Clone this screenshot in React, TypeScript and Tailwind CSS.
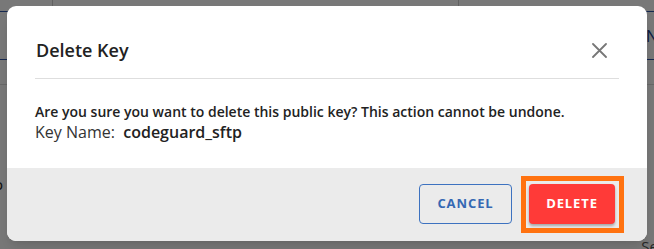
import React from "react";

export default function App() {
  return (
    <div
      className="relative w-[654px] h-[249px] overflow-hidden bg-white"
      style={{ fontFamily: '"Open Sans", "Noto Sans", sans-serif' }}
    >
      {/* underlying page */}
      <div className="flex flex-col w-full h-full">
        <div className="flex h-[12px] border-b border-[#2f55a8]">
          <div className="w-[53px] border-r border-[#cfcfcf]" />
          <div className="w-[406px] border-r border-[#cfcfcf]" />
          <div className="flex-1" />
        </div>
        <div className="flex justify-end h-[48px] border-b border-[#2f55a8]">
          <span className="mt-[14px] text-[16px] text-[#1f3f8f] leading-[20px] -mr-[4px]">N</span>
        </div>
        <div className="h-[25px] border-b border-[#dddddd]" />
        <div className="flex-1 relative">
          <span className="absolute left-[-6px] top-[88px] text-[15px] text-[#222]">o</span>
          <span className="absolute right-[-4px] bottom-[-8px] text-[15px] text-[#555]">Se</span>
        </div>
      </div>

      {/* backdrop */}
      <div className="absolute inset-0 bg-black/[0.53]" />

      {/* modal */}
      <div className="absolute left-[7px] top-[6px] w-[640px] h-[235px] bg-white rounded-[9px] overflow-hidden flex flex-col shadow-lg">
        <div className="px-[28px] pt-[32px]">
          <div className="flex items-center justify-between pb-[16px] border-b border-[#dedede]">
            <h2 className="text-[18px] leading-[24px] font-semibold text-[#222] pl-[1px]">Delete Key</h2>
            <button className="w-[20px] h-[20px] flex items-center justify-center mr-[10px]">
              <svg width="15" height="15" viewBox="0 0 15 15" fill="none">
                <path d="M1 1L14 14M14 1L1 14" stroke="#777" strokeWidth="1.8" strokeLinecap="round" />
              </svg>
            </button>
          </div>
          <div className="pt-[23px] pb-[25px]">
            <p className="text-[14px] leading-[19px] font-semibold text-[#222]">
              Are you sure you want to delete this public key? This action cannot be undone.
            </p>
            <p className="text-[16px] leading-[22px] text-[#333]">
              Key Name:&nbsp; <span className="font-semibold text-[#222]">codeguard_sftp</span>
            </p>
          </div>
        </div>
        <div className="flex-1 bg-[#ebebeb] flex justify-end items-start pt-[16px] pr-[32px] gap-[17px]">
          <button className="w-[93px] h-[40px] rounded-[4px] border border-[#3d72c0] text-[#3568b3] text-[13px] font-bold tracking-[0.9px] flex items-center justify-center">
            CANCEL
          </button>
          <div className="relative">
            <button className="w-[86px] h-[40px] rounded-[4px] bg-[#ff3a38] text-white text-[13px] font-bold tracking-[0.9px] flex items-center justify-center shadow-[0_2px_3px_rgba(0,0,0,0.3)]">
              DELETE
            </button>
            <div className="absolute left-[-8px] top-[-8px] w-[103px] h-[57px] border-[5px] border-[#ff7210] pointer-events-none" />
          </div>
        </div>
      </div>
    </div>
  );
}
